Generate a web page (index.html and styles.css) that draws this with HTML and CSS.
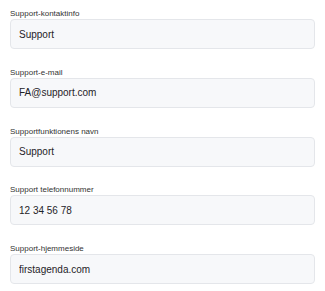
FILE: index.html
```html
<!DOCTYPE html>
<html lang="da">
<head>
  <meta charset="UTF-8" />
  <meta name="viewport" content="width=device-width, initial-scale=1.0"/>
  <title>Support</title>
  <link rel="stylesheet" href="styles.css">
</head>
<body>

  <form class="support-form">
    <div class="field">
      <label for="support-contact">Support-kontaktinfo</label>
      <input type="text" id="support-contact" value="Support">
    </div>

    <div class="field">
      <label for="support-email">Support-e-mail</label>
      <input type="email" id="support-email" value="FA@support.com">
    </div>

    <div class="field">
      <label for="support-name">Supportfunktionens navn</label>
      <input type="text" id="support-name" value="Support">
    </div>

    <div class="field">
      <label for="support-phone">Support telefonnummer</label>
      <input type="tel" id="support-phone" value="12 34 56 78">
    </div>

    <div class="field">
      <label for="support-site">Support-hjemmeside</label>
      <input type="text" id="support-site" value="firstagenda.com">
    </div>
  </form>

</body>
</html>
```

FILE: styles.css
```css
body {
  font-family: 'Liberation Sans', Arial, sans-serif;
  background-color: white;
  margin: 0;
  color: #1f2328;
}

.support-form {
  display: flex;
  flex-direction: column;
  gap: 18.75px;
  padding: 9px 10px 0;
}

.field {
  display: flex;
  flex-direction: column;
}

label {
  font-size: 8px;
  line-height: 10px;
  color: #333;
}

input {
  box-sizing: border-box;
  height: 30px;
  padding: 0 8px;
  border: 1px solid #e4e6ea;
  border-radius: 4px;
  background-color: #f7f8fa;
  font-family: inherit;
  font-size: 10px;
  color: #1f2328;
}
```
